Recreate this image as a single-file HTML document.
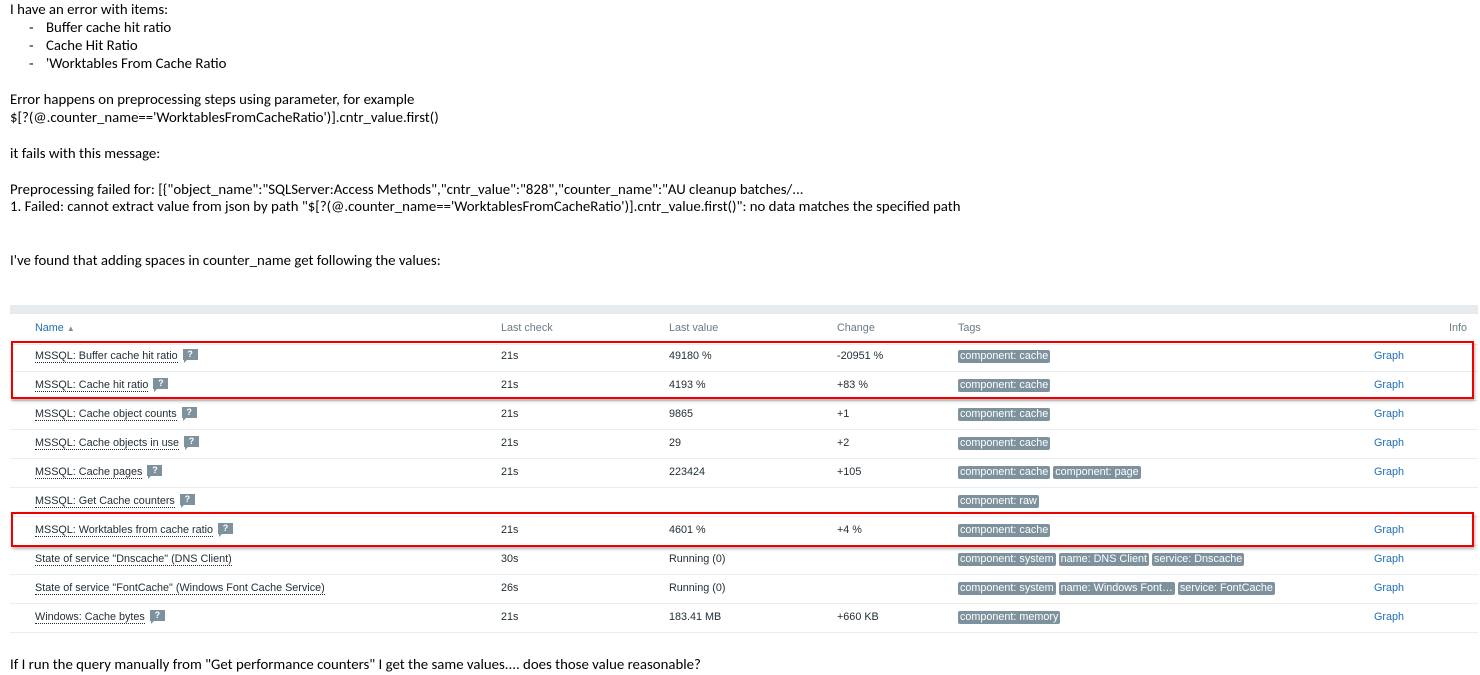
<!DOCTYPE html>
<html><head><meta charset="utf-8"><style>
body{margin:0;background:#fff;width:1480px;height:675px;overflow:hidden;position:relative;font-family:Calibri,"Carlito","Liberation Sans",sans-serif;}
.t{position:absolute;left:10px;font-size:14.8px;color:#000;white-space:nowrap;line-height:18px;}
.b{position:absolute;left:29px;font-size:14.8px;line-height:18px}
.tb{position:absolute;left:10px;top:306px;width:1468px;font-family:Arial,"Liberation Sans",sans-serif;font-size:10.8px;color:#1f2c33;}
.bar{position:absolute;top:-1px;left:0;width:1468px;height:9px;background:#e8ebee;}
.r{position:absolute;left:0;width:1468px;height:29px;border-bottom:1px solid #ebeef0;}
.c{position:absolute;top:0;line-height:29px;white-space:nowrap;}
.n{left:25px;}.n span{border-bottom:1px dotted #1f2c33;}
.lc{left:491px}.lv{left:659px}.ch{left:827px}.tg{left:948px}.gr{left:1364px;color:#1f6fb5}
.q{display:inline-block;width:15px;height:11px;background:#7e929e;color:#fff;font-size:9px;font-weight:bold;line-height:11px;text-align:center;margin-left:5px;vertical-align:2px;position:relative;font-style:normal}
.q:after{content:"";position:absolute;left:1px;bottom:-3px;border-left:3px solid #7e929e;border-bottom:3px solid transparent}
.tag{display:inline-block;background:#7e929e;color:#fff;padding:0 2px;line-height:13px;border-radius:2px;margin-right:3px;font-weight:normal}
.hd{color:#6b7a85}
.red{position:absolute;border:2px solid #e00;box-shadow:1px 2px 3px rgba(0,0,0,.3)}
</style></head><body>
<div class="t" style="top:0">I have an error with items:</div>
<div class="b" style="top:18px">-</div><div class="t" style="top:18px;left:46px">Buffer cache hit ratio</div>
<div class="b" style="top:36px">-</div><div class="t" style="top:36px;left:46px">Cache Hit Ratio</div>
<div class="b" style="top:54px">-</div><div class="t" style="top:54px;left:46px">'Worktables From Cache Ratio</div>
<div class="t" style="top:90px">Error happens on preprocessing steps using parameter, for example</div>
<div class="t" style="top:108px">$[?(@.counter_name=='WorktablesFromCacheRatio')].cntr_value.first()</div>
<div class="t" style="top:144px">it fails with this message:</div>
<div class="t" style="top:180px">Preprocessing failed for: [{"object_name":"SQLServer:Access Methods","cntr_value":"828","counter_name":"AU cleanup batches/...</div>
<div class="t" style="top:197px">1. Failed: cannot extract value from json by path "$[?(@.counter_name=='WorktablesFromCacheRatio')].cntr_value.first()": no data matches the specified path</div>
<div class="t" style="top:251px">I've found that adding spaces in counter_name get following the values:</div>
<div class="t" style="top:655px">If I run the query manually from "Get performance counters" I get the same values.... does those value reasonable?</div>

<div class="tb">
<div class="bar"></div>
<div class="r" style="top:8px;height:30px"><div class="c n" style="top:0px;color:#1f6fb5">Name <span style="border:0;font-size:8px;color:#7e929e">▲</span></div><div class="c lc hd">Last check</div><div class="c lv hd">Last value</div><div class="c ch hd">Change</div><div class="c tg hd">Tags</div><div class="c hd" style="left:1439px">Info</div></div>
<div class="r" style="top:36px"><div class="c n"><span>MSSQL: Buffer cache hit ratio</span><i class="q">?</i></div><div class="c lc">21s</div><div class="c lv">49180 %</div><div class="c ch">-20951 %</div><div class="c tg"><span class="tag">component: cache</span></div><div class="c gr">Graph</div></div>
<div class="r" style="top:65px"><div class="c n"><span>MSSQL: Cache hit ratio</span><i class="q">?</i></div><div class="c lc">21s</div><div class="c lv">4193 %</div><div class="c ch">+83 %</div><div class="c tg"><span class="tag">component: cache</span></div><div class="c gr">Graph</div></div>
<div class="r" style="top:94px"><div class="c n"><span>MSSQL: Cache object counts</span><i class="q">?</i></div><div class="c lc">21s</div><div class="c lv">9865</div><div class="c ch">+1</div><div class="c tg"><span class="tag">component: cache</span></div><div class="c gr">Graph</div></div>
<div class="r" style="top:123px"><div class="c n"><span>MSSQL: Cache objects in use</span><i class="q">?</i></div><div class="c lc">21s</div><div class="c lv">29</div><div class="c ch">+2</div><div class="c tg"><span class="tag">component: cache</span></div><div class="c gr">Graph</div></div>
<div class="r" style="top:152px"><div class="c n"><span>MSSQL: Cache pages</span><i class="q">?</i></div><div class="c lc">21s</div><div class="c lv">223424</div><div class="c ch">+105</div><div class="c tg"><span class="tag">component: cache</span><span class="tag">component: page</span></div><div class="c gr">Graph</div></div>
<div class="r" style="top:181px"><div class="c n"><span>MSSQL: Get Cache counters</span><i class="q">?</i></div><div class="c tg"><span class="tag">component: raw</span></div></div>
<div class="r" style="top:210px"><div class="c n"><span>MSSQL: Worktables from cache ratio</span><i class="q">?</i></div><div class="c lc">21s</div><div class="c lv">4601 %</div><div class="c ch">+4 %</div><div class="c tg"><span class="tag">component: cache</span></div><div class="c gr">Graph</div></div>
<div class="r" style="top:239px"><div class="c n"><span>State of service "Dnscache" (DNS Client)</span></div><div class="c lc">30s</div><div class="c lv">Running (0)</div><div class="c tg"><span class="tag">component: system</span><span class="tag">name: DNS Client</span><span class="tag">service: Dnscache</span></div><div class="c gr">Graph</div></div>
<div class="r" style="top:268px"><div class="c n"><span>State of service "FontCache" (Windows Font Cache Service)</span></div><div class="c lc">26s</div><div class="c lv">Running (0)</div><div class="c tg"><span class="tag">component: system</span><span class="tag">name: Windows Font…</span><span class="tag">service: FontCache</span></div><div class="c gr">Graph</div></div>
<div class="r" style="top:297px"><div class="c n"><span>Windows: Cache bytes</span><i class="q">?</i></div><div class="c lc">21s</div><div class="c lv">183.41 MB</div><div class="c ch">+660 KB</div><div class="c tg"><span class="tag">component: memory</span></div><div class="c gr">Graph</div></div>
</div>
<div class="red" style="left:11px;top:341px;width:1459px;height:54px"></div>
<div class="red" style="left:11px;top:512px;width:1459px;height:31px"></div>
</body></html>
